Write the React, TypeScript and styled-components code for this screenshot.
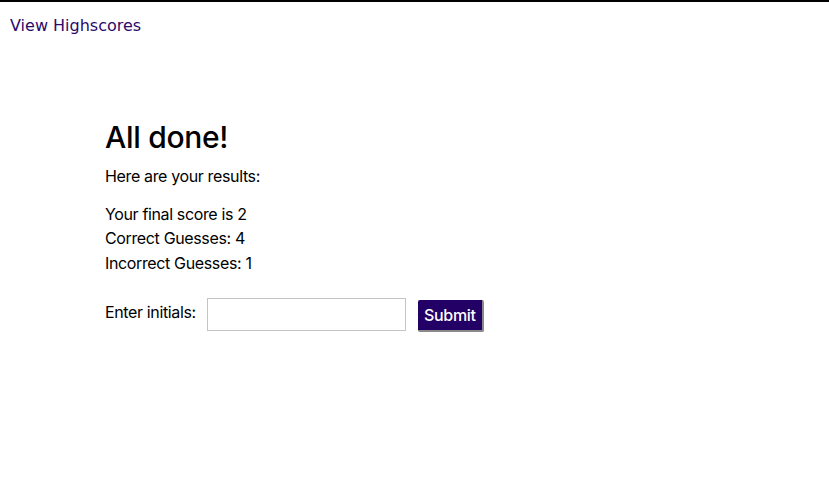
import React from "react";
import styled, { createGlobalStyle } from "styled-components";

const Global = createGlobalStyle`
  html, body { margin: 0; padding: 0; background: #fff; }
  body { font-family: Inter, "Liberation Sans", sans-serif; color: #000; }
`;

const Page = styled.div`
  border-top: 2px solid #000;
  min-height: 499px;
`;

const Header = styled.header`
  padding: 14px 10px 0;
  display: flex;
`;

const HighscoresLink = styled.a`
  font-family: "DejaVu Sans", Verdana, sans-serif;
  font-size: 16px;
  color: #2c0a6b;
  text-decoration: none;
  cursor: pointer;
`;

const Results = styled.main`
  margin: 84px 0 0 105px;
  display: flex;
  flex-direction: column;
  letter-spacing: -0.36px;
`;

const Title = styled.h1`
  margin: 0;
  font-size: 30px;
  font-weight: 500;
  letter-spacing: -0.3px;
  line-height: 36px;
`;

const Line = styled.p<{ $gap?: number }>`
  margin: ${(p) => p.$gap ?? 0}px 0 0;
  font-size: 16px;
  line-height: 24.5px;
`;

const Form = styled.form`
  display: flex;
  align-items: flex-start;
  margin-top: 25px;
`;

const Label = styled.label`
  font-size: 16px;
  line-height: 24px;
  margin-right: 11px;
`;

const Input = styled.input`
  width: 199px;
  height: 33px;
  box-sizing: border-box;
  border: 1px solid #c4c4c4;
  margin-top: -2px;
  outline: none;
  font-size: 16px;
`;

const SubmitButton = styled.button`
  margin-left: 12px;
  height: 32px;
  width: 66px;
  box-sizing: border-box;
  background: #220066;
  color: #fff;
  border: none;
  border-right: 2px solid #8a8a8a;
  border-bottom: 2px solid #8a8a8a;
  border-radius: 2px;
  font-family: Inter, "Liberation Sans", sans-serif;
  font-size: 16px;
  font-weight: 500;
  letter-spacing: -0.3px;
  padding: 0 0 1px;
`;

export default function App() {
  return (
    <>
      <Global />
      <Page>
        <Header>
          <HighscoresLink>View Highscores</HighscoresLink>
        </Header>
        <Results>
          <Title>All done!</Title>
          <Line $gap={9}>Here are your results:</Line>
          <Line $gap={13}>Your final score is 2</Line>
          <Line>Correct Guesses: 4</Line>
          <Line>Incorrect Guesses: 1</Line>
          <Form onSubmit={(e) => e.preventDefault()}>
            <Label>Enter initials:</Label>
            <Input type="text" />
            <SubmitButton type="submit">Submit</SubmitButton>
          </Form>
        </Results>
      </Page>
    </>
  );
}
